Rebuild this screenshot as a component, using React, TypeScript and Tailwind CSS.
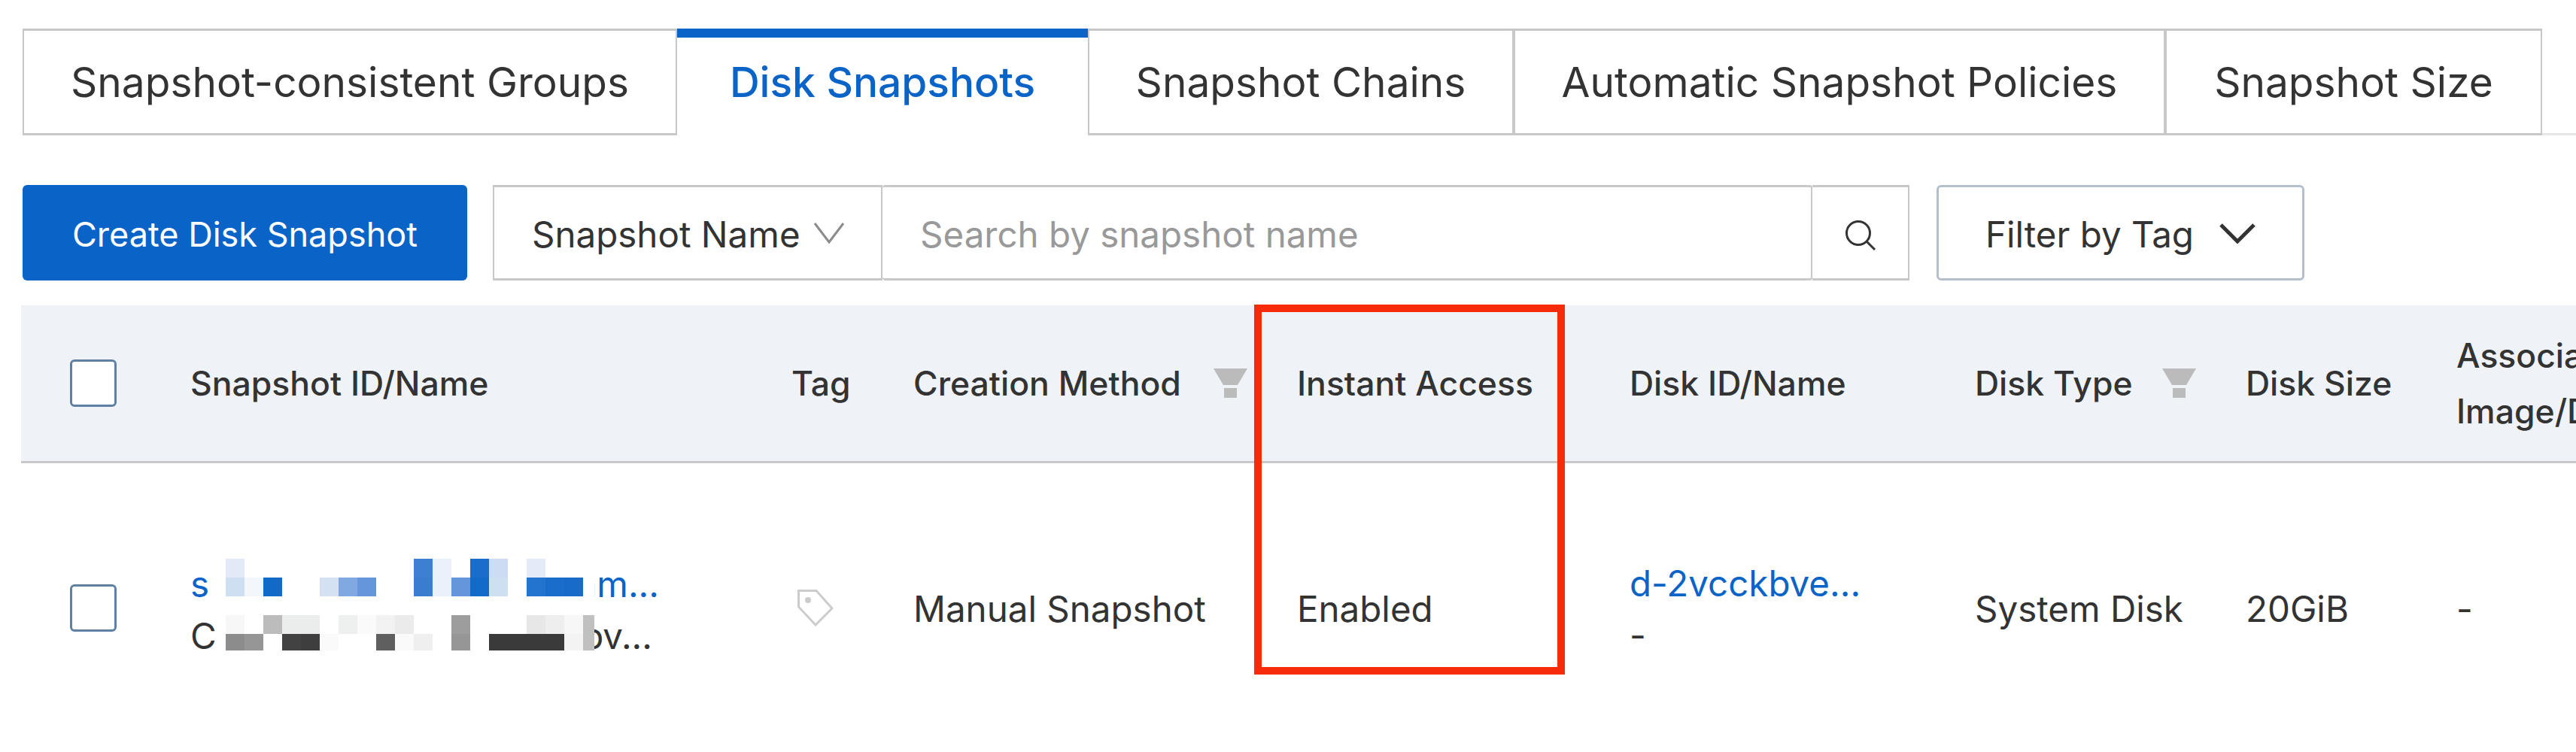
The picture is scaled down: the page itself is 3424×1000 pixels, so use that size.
const headers = [
  { label: "Snapshot ID/Name", w: "w-[799px]" },
  { label: "Tag", w: "w-[162px]" },
  { label: "Creation Method", w: "w-[510px]", filter: true },
  { label: "Instant Access", w: "w-[442px]" },
  { label: "Disk ID/Name", w: "w-[459px]" },
  { label: "Disk Type", w: "w-[360px]", filter: true },
  { label: "Disk Size", w: "w-[280px]" },
];

const mosaic: [number, number, string][] = [
  [0, 0, "#e1eaf6"], [10, 0, "#3f7fd3"], [11, 0, "#e9f1fb"], [13, 0, "#1a6dcb"], [14, 0, "#cddcf2"], [16, 0, "#e2ebf7"],
  [0, 1, "#cfdff2"], [1, 1, "#f3f7fc"], [2, 1, "#126ac8"], [5, 1, "#d3e1f3"], [6, 1, "#7fa9e0"], [7, 1, "#6596db"],
  [10, 1, "#397cd0"], [11, 1, "#e9f1fb"], [12, 1, "#6596db"], [13, 1, "#126bc9"], [14, 1, "#cfdff2"],
  [16, 1, "#2274cf"], [17, 1, "#1b6dcb"], [18, 1, "#186bc9"],
  [0, 3, "#f7f7f7"], [2, 3, "#bcbcbc"], [3, 3, "#ebecec"], [4, 3, "#ebecec"], [6, 3, "#eeefef"], [7, 3, "#fafafa"],
  [8, 3, "#f2f2f2"], [9, 3, "#ebebeb"], [12, 3, "#9d9d9d"], [16, 3, "#e7e7e7"], [17, 3, "#eeeeee"], [18, 3, "#f7f7f7"],
  [0, 4, "#8c8c8c"], [1, 4, "#969696"], [3, 4, "#424242"], [4, 4, "#3e3e3e"], [5, 4, "#fafafa"], [8, 4, "#5f5f5f"],
  [9, 4, "#fafafa"], [10, 4, "#efefef"], [12, 4, "#969696"], [14, 4, "#3a3a3a"], [15, 4, "#3a3a3a"], [16, 4, "#3a3a3a"],
  [17, 4, "#3a3a3a"], [18, 4, "#f3f3f3"],
];

function FilterIcon() {
  return (
    <svg width="45" height="39" viewBox="0 0 45 39" className="shrink-0">
      <path d="M0 0H45L32 22H13Z" fill="#bbbbbb" />
      <rect x="14" y="26" width="17" height="13" fill="#bbbbbb" />
    </svg>
  );
}

function Checkbox() {
  return <div className="h-[63px] w-[62px] rounded-[6px] border-[3px] border-[#5f7fa3] bg-white" />;
}

function Tab({ label, active, w }: { label: string; active?: boolean; w: string }) {
  if (active) {
    return (
      <div className={`${w} flex h-[142px] items-center justify-center border-t-[12px] border-[#0a64c8] pb-[12px] text-[55px] font-medium text-[#0a64c8]`}>
        {label}
      </div>
    );
  }
  return (
    <div className={`${w} flex h-[142px] items-center justify-center border-x-2 border-y-[3px] border-[#c8c8c8] text-[55px] text-[#333333]`}>
      {label}
    </div>
  );
}

export default function App() {
  return (
    <div className="relative h-[1000px] w-[3424px] overflow-hidden bg-white pt-[38px] text-[#333333] [font-family:Inter,sans-serif]">
      <div className="flex items-end pl-[30px]">
        <Tab label="Snapshot-consistent Groups" w="w-[870px]" />
        <Tab label="Disk Snapshots" w="w-[546px]" active />
        <Tab label="Snapshot Chains" w="w-[566px]" />
        <Tab label="Automatic Snapshot Policies" w="w-[866px]" />
        <Tab label="Snapshot Size" w="w-[501px]" />
        <div className="flex-1 border-b-[3px] border-[#e6e6e6]" />
      </div>

      <div className="mt-[66px] flex h-[127px] pl-[30px]">
        <button type="button" className="h-full w-[591px] rounded-[6px] bg-[#0a64c8] pt-[4px] text-[45px] text-white">
          Create Disk Snapshot
        </button>
        <div className="ml-[34px] flex h-full w-[518px] items-center justify-between border-x-2 border-y-[3px] border-[#c8c8c8] pl-[50px] pr-[48px] pt-[4px] text-[47.5px]">
          <span>Snapshot Name</span>
          <svg width="42" height="30" viewBox="0 0 42 30" fill="none" stroke="#8c8c8c" strokeWidth="3" className="mb-[4px]">
            <path d="M2 2L21 27L40 2" />
          </svg>
        </div>
        <div className="flex h-full w-[1236px] items-center rounded-[4px] border-y-[3px] border-r-2 border-[#c8c8c8] pl-[50px] pt-[4px] text-[47.5px] text-[#999999]">
          Search by snapshot name
        </div>
        <div className="flex h-full w-[129px] items-center justify-center border-y-[3px] border-r-2 border-[#c8c8c8] pt-[6px]">
          <svg width="42" height="42" viewBox="0 0 42 42" fill="none" stroke="#333333" strokeWidth="3">
            <circle cx="18" cy="18" r="15.5" />
            <path d="M29 29L40 40" />
          </svg>
        </div>
        <div className="ml-[36px] flex h-full w-[489px] items-center justify-between rounded-[6px] border-[3px] border-[#b4bfcc] pl-[62px] pr-[62px] pt-[4px] text-[47.5px]">
          <span>Filter by Tag</span>
          <svg width="48" height="28" viewBox="0 0 48 28" fill="none" stroke="#333333" strokeWidth="5" className="mb-[4px]">
            <path d="M2 3L24 25L46 3" />
          </svg>
        </div>
      </div>

      <div className="ml-[28px] mt-[33px] flex h-[210px] items-center border-b-[3px] border-[#c8c8c8] bg-[#eff3f8] pl-[65px] text-[44.5px] font-medium">
        <div className="w-[160px] shrink-0"><Checkbox /></div>
        {headers.map((h) => (
          <div key={h.label} className={`${h.w} flex shrink-0 items-center justify-between pr-[66px]`}>
            <span className="whitespace-nowrap pt-[2px]">{h.label}</span>
            {h.filter && <FilterIcon />}
          </div>
        ))}
        <div className="shrink-0 whitespace-nowrap leading-[74px]">
          Associated
          <br />
          Image/Disk
        </div>
      </div>

      <div className="ml-[28px] flex h-[384px] items-center pl-[65px] text-[47.5px]">
        <div className="w-[160px] shrink-0"><Checkbox /></div>
        <div className="relative w-[799px] shrink-0 pt-[5px] leading-[69px]">
          <div className="flex w-[623px] justify-between text-[#0a64c8]">
            <span>s</span>
            <span>am...</span>
          </div>
          <div className="flex w-[614px] justify-between">
            <span>C</span>
            <span>bv...</span>
          </div>
          <svg width="490" height="122" viewBox="0 0 490 122" shapeRendering="crispEdges" className="absolute left-[47px] top-[6px]">
            <rect width="490" height="122" fill="#ffffff" />
            {mosaic.map(([x, y, c]) => (
              <rect key={`${x}-${y}`} x={x * 25} y={y * 25} width="25" height="25" fill={c} />
            ))}
            <rect x="475" y="75" width="15" height="47" fill="#c0c0c0" />
          </svg>
        </div>
        <div className="w-[162px] shrink-0 pl-[8px]">
          <svg width="48" height="49" viewBox="0 0 48 49" fill="none" stroke="#cccccc" strokeWidth="3">
            <path d="M1.5 1.5H25L46 25L24 47L1.5 23Z" />
            <circle cx="14" cy="14" r="4" fill="#cccccc" stroke="none" />
          </svg>
        </div>
        <div className="w-[510px] shrink-0 pt-[3px]">Manual Snapshot</div>
        <div className="w-[442px] shrink-0 pt-[3px]">Enabled</div>
        <div className="w-[459px] shrink-0 pt-[4px] leading-[69px]">
          <div className="text-[#0a64c8]">d-2vcckbve...</div>
          <div>-</div>
        </div>
        <div className="w-[360px] shrink-0 pt-[3px]">System Disk</div>
        <div className="w-[280px] shrink-0 pt-[3px]">20GiB</div>
        <div className="shrink-0 pt-[3px]">-</div>
      </div>

      {/* annotation drawn on top of the screenshot */}
      <div className="absolute left-[1667px] top-[405px] h-[492px] w-[413px] border-[10px] border-[#f62b0a]" />
    </div>
  );
}
